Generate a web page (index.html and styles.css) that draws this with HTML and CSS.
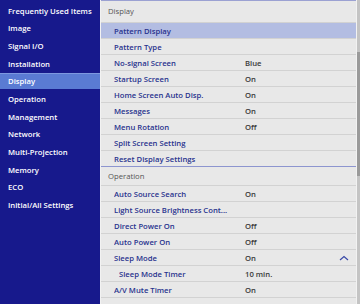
FILE: index.html
```html
<!DOCTYPE html>
<html lang="en">
<head>
    <meta charset="UTF-8">
    <meta name="viewport" content="width=device-width, initial-scale=1.0">
    <title>Display</title>
    <link rel="stylesheet" href="styles.css">
</head>
<body>
    <div class="screen">
        <nav class="side-menu">
            <a href="#">Frequently Used Items</a>
            <a href="#">Image</a>
            <a href="#">Signal I/O</a>
            <a href="#">Installation</a>
            <a href="#" class="active">Display</a>
            <a href="#">Operation</a>
            <a href="#">Management</a>
            <a href="#">Network</a>
            <a href="#">Multi-Projection</a>
            <a href="#">Memory</a>
            <a href="#">ECO</a>
            <a href="#">Initial/All Settings</a>
        </nav>

        <div class="settings">
            <div class="section">
                <div class="section-title">Display</div>
                <div class="row selected"><span class="label">Pattern Display</span><span class="value"></span></div>
                <div class="row"><span class="label">Pattern Type</span><span class="value"></span></div>
                <div class="row"><span class="label">No-signal Screen</span><span class="value">Blue</span></div>
                <div class="row"><span class="label">Startup Screen</span><span class="value">On</span></div>
                <div class="row"><span class="label">Home Screen Auto Disp.</span><span class="value">On</span></div>
                <div class="row"><span class="label">Messages</span><span class="value">On</span></div>
                <div class="row"><span class="label">Menu Rotation</span><span class="value">Off</span></div>
                <div class="row"><span class="label">Split Screen Setting</span><span class="value"></span></div>
                <div class="row"><span class="label">Reset Display Settings</span><span class="value"></span></div>
            </div>
            <div class="section">
                <div class="section-title second">Operation</div>
                <div class="row"><span class="label">Auto Source Search</span><span class="value">On</span></div>
                <div class="row"><span class="label">Light Source Brightness Cont...</span><span class="value"></span></div>
                <div class="row"><span class="label">Direct Power On</span><span class="value">Off</span></div>
                <div class="row"><span class="label">Auto Power On</span><span class="value">Off</span></div>
                <div class="row"><span class="label">Sleep Mode</span><span class="value">On</span>
                    <svg class="chevron" width="10" height="6" viewBox="0 0 10 6"><path d="M1 5 L5 1.5 L9 5" fill="none" stroke="#3a4aa8" stroke-width="1.2"/></svg>
                </div>
                <div class="row sub"><span class="label">Sleep Mode Timer</span><span class="value">10 min.</span></div>
                <div class="row"><span class="label">A/V Mute Timer</span><span class="value">On</span></div>
                <div class="row"><span class="label">Standby Mode</span><span class="value">Communication On</span></div>
            </div>
        </div>

        <div class="scrollbar"><div class="thumb"></div></div>
    </div>
</body>
</html>
```

FILE: styles.css
```css
body {
    margin: 0;
    padding: 0;
    font-family: "Open Sans", "Noto Sans", sans-serif;
    font-size: 7.7px;
    background-color: #f2f2f2;
}
.screen {
    display: flex;
    width: 360px;
    height: 304px;
    overflow: hidden;
}
.side-menu {
    width: 100px;
    flex-shrink: 0;
    background-color: #17198c;
    padding-top: 2.5px;
    display: flex;
    flex-direction: column;
}
.side-menu a {
    color: #fff;
    text-decoration: none;
    font-weight: 600;
    height: 16px;
    line-height: 16px;
    margin-bottom: 1.7px;
    padding-left: 8px;
}
.side-menu a.active {
    background-color: #5a7bd3;
    box-shadow: inset 0 1px 0 #7d98e0;
}
.settings {
    flex: 1;
    margin-left: 1px;
    border-top: 1px solid #9ba1d2;
    overflow: hidden;
}
.section {
    border-bottom: 1px solid #8d95cf;
}
.section-title {
    height: 21px;
    line-height: 21px;
    padding-left: 7px;
    color: #555;
    background-color: #e8e8e8;
}
.section-title.second {
    height: 18px;
    line-height: 18px;
}
.row {
    display: flex;
    align-items: center;
    height: 15px;
    border-top: 1px solid #d2d2d2;
    background-color: #e8e8e8;
    padding-left: 13px;
}
.row.selected {
    background-color: #b3bde2;
}
.row.sub {
    padding-left: 18px;
}
.label {
    width: 131px;
    flex-shrink: 0;
    color: #28338e;
    font-weight: 600;
    white-space: nowrap;
    overflow: hidden;
}
.row.sub .label {
    width: 126px;
}
.value {
    color: #3a3a3a;
    font-weight: 600;
    white-space: nowrap;
}
.chevron {
    margin-left: auto;
    margin-right: 7px;
}
.scrollbar {
    width: 3px;
    margin-left: 1px;
    background-color: #c4c4c4;
    flex-shrink: 0;
}
.thumb {
    margin-top: 52px;
    height: 124px;
    background-color: #9a9a9a;
}
```
